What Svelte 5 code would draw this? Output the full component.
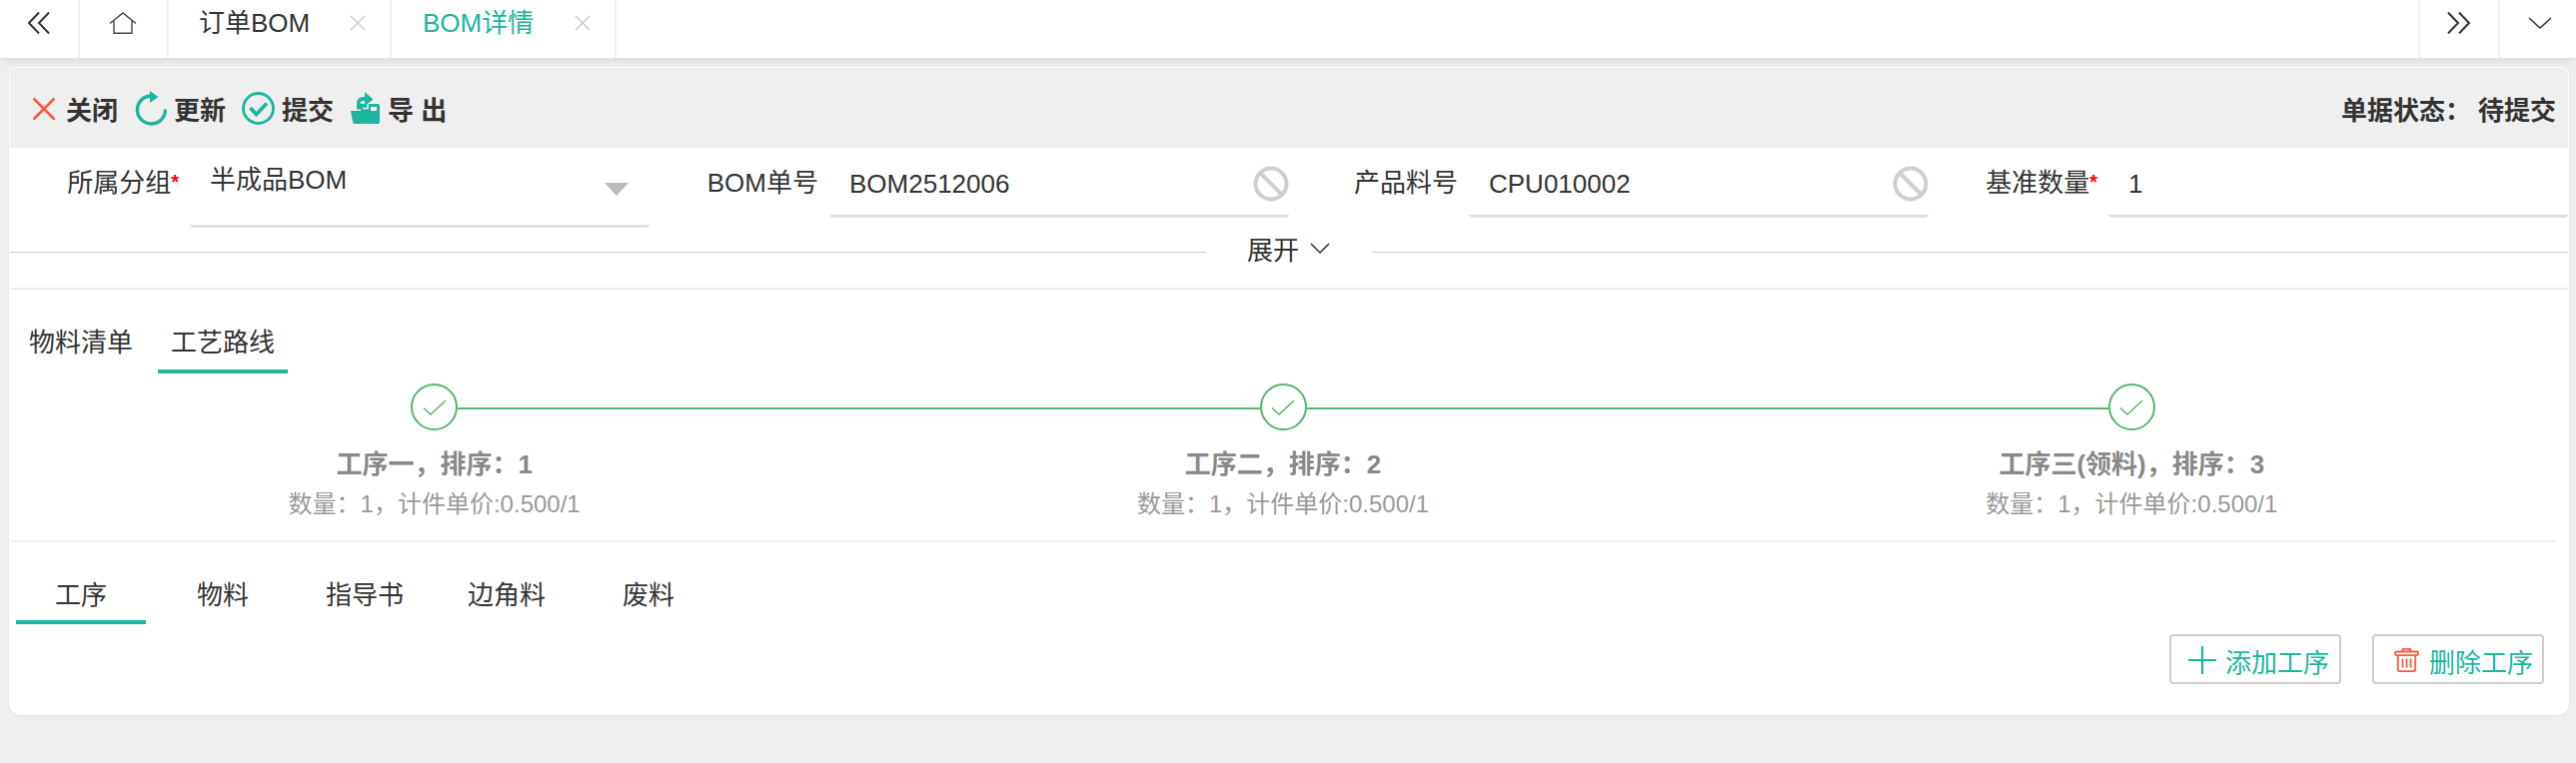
<script>
  const nav = ['物料', '指导书', '边角料', '废料'];
  const steps = [
    { title: '工序一，排序：1' },
    { title: '工序二，排序：2' },
    { title: '工序三(领料)，排序：3' }
  ];
</script>

<div class="page">
  <header class="topbar">
    <div class="cell arrow-left">
      <svg width="22" height="22" viewBox="0 0 22 22" fill="none" stroke="#333" stroke-width="2"><path d="M11 0.5 1 11l10 10.5M21 0.5 11 11l10 10.5" /></svg>
    </div>
    <div class="cell home">
      <svg width="28" height="22" viewBox="0 0 28 22" fill="none" stroke="#444" stroke-width="1.4"><path d="M1 11.5 14 1l13 10.5M5 9v12.3h18V9" /></svg>
    </div>
    <div class="cell tab-a">
      <span class="tab-text">订单BOM</span>
      <svg class="close" width="16" height="16" viewBox="0 0 16 16" stroke="#c4c4c4" stroke-width="1.3"><path d="M1 1l14 14M15 1 1 15" /></svg>
    </div>
    <div class="cell tab-b">
      <span class="tab-text active">BOM详情</span>
      <svg class="close" width="16" height="16" viewBox="0 0 16 16" stroke="#c4c4c4" stroke-width="1.3"><path d="M1 1l14 14M15 1 1 15" /></svg>
    </div>
    <div class="spacer"></div>
    <div class="cell arrow-right">
      <svg width="23" height="22" viewBox="0 0 23 22" fill="none" stroke="#333" stroke-width="2"><path d="M1 0.5 11 11 1 21.5M12 0.5 22 11 12 21.5" /></svg>
    </div>
    <div class="cell arrow-down">
      <svg width="24" height="12" viewBox="0 0 24 12" fill="none" stroke="#333" stroke-width="1.5"><path d="M1 1l11 10L23 1" /></svg>
    </div>
  </header>

  <main class="main">
    <section class="card">
      <div class="toolbar">
        <button class="tool first">
          <svg width="24" height="24" viewBox="0 0 24 24" stroke="#fb5a3c" stroke-width="2.6"><path d="M1.5 1.5l21 21M22.5 1.5l-21 21" /></svg>
          <span>关闭</span>
        </button>
        <button class="tool">
          <svg width="32" height="35" viewBox="0 0 32 35" fill="none"><path d="M15.5 5A14 14 0 1 0 30.4 18.5" stroke="#1ab69f" stroke-width="3.4" /><path d="M15 0l8.5 6L15 12z" fill="#1ab69f" /></svg>
          <span>更新</span>
        </button>
        <button class="tool">
          <svg width="33" height="33" viewBox="0 0 33 33" fill="none"><circle cx="16.5" cy="16.5" r="15" stroke="#1ab69f" stroke-width="2.8" /><path d="M8.5 16l6 6.5L25 11.5" stroke="#1ab69f" stroke-width="3.8" /></svg>
          <span>提交</span>
        </button>
        <button class="tool">
          <svg width="29" height="33" viewBox="0 0 29 33">
            <path d="M10 12h17a2 2 0 0 1 2 2v16H10z" fill="#1ab69f" />
            <rect x="20" y="15" width="6" height="4.5" fill="#efefef" />
            <path d="M0 19h29v11a2 2 0 0 1-2 2H4a2 2 0 0 1-2-2z" fill="#1ab69f" />
            <path d="M8 17.5V11a4 4 0 0 1 4-4h3" fill="none" stroke="#1ab69f" stroke-width="4" />
            <path d="M12 16.5h5V11" fill="none" stroke="#efefef" stroke-width="1.5" />
            <path d="M14 0l8.5 7.5L14 14z" fill="#1ab69f" />
          </svg>
          <span>导&nbsp;出</span>
        </button>
        <div class="status">单据状态：<span class="status-value">待提交</span></div>
      </div>

      <div class="form">
        <div class="field">
          <span class="label">所属分组<i>*</i></span>
          <div class="control select">
            <span class="value">半成品BOM</span>
            <span class="caret"></span>
          </div>
        </div>
        <div class="field">
          <span class="label">BOM单号</span>
          <div class="control">
            <span class="value">BOM2512006</span>
            <svg class="ban" width="36" height="36" viewBox="0 0 36 36" fill="none" stroke="#cfcfcf" stroke-width="4"><circle cx="18" cy="18" r="15.5" /><path d="M7 7l22 22" /></svg>
          </div>
        </div>
        <div class="field">
          <span class="label">产品料号</span>
          <div class="control">
            <span class="value">CPU010002</span>
            <svg class="ban" width="36" height="36" viewBox="0 0 36 36" fill="none" stroke="#cfcfcf" stroke-width="4"><circle cx="18" cy="18" r="15.5" /><path d="M7 7l22 22" /></svg>
          </div>
        </div>
        <div class="field">
          <span class="label">基准数量<i>*</i></span>
          <div class="control">
            <span class="value">1</span>
          </div>
        </div>
      </div>

      <div class="expand">
        <span class="rule"></span>
        <span class="expand-btn">
          展开
          <svg width="20" height="11" viewBox="0 0 20 11" fill="none" stroke="#333" stroke-width="1.5"><path d="M1 1l9 9 9-9" /></svg>
        </span>
        <span class="rule"></span>
      </div>

      <div class="tabs upper">
        <div class="tabitem">物料清单</div>
        <div class="tabitem on">工艺路线</div>
      </div>

      <div class="steps">
        {#each steps as s, i}
          <div class="step">
            <div class="head">
              <span class="conn" class:hide={i === 0}></span>
              <span class="dot">
                <svg width="24" height="16" viewBox="0 0 24 16" fill="none" stroke="#57b56f" stroke-width="1.5"><path d="M1 8.5l7 6.5L23 1" /></svg>
              </span>
              <span class="conn" class:hide={i === steps.length - 1}></span>
            </div>
            <div class="title">{s.title}</div>
            <div class="sub">数量：1，计件单价:0.500/1</div>
          </div>
        {/each}
      </div>

      <div class="tabs lower">
        <div class="tabitem on">工序</div>
        {#each nav as n}
          <div class="tabitem">{n}</div>
        {/each}
      </div>

      <div class="actions">
        <button class="btn add">
          <svg width="28" height="28" viewBox="0 0 28 28" stroke="#1ab69f" stroke-width="2.2"><path d="M14 0v28M0 14h28" /></svg>
          <span>添加工序</span>
        </button>
        <button class="btn del">
          <svg width="25" height="24" viewBox="0 0 25 24" fill="none" stroke="#fb5a3c" stroke-width="1.8"><path d="M8.5 3.5V1.5a.8.8 0 0 1 .8-.6h6.4a.8.8 0 0 1 .8.6v2" /><rect x="1" y="3.5" width="23" height="3.6" rx="1.4" /><path d="M3.8 7.2V21.5a1.6 1.6 0 0 0 1.6 1.6h14.2a1.6 1.6 0 0 0 1.6-1.6V7.2M8.5 10.5v9M12.5 10.5v9M16.5 10.5v9" /></svg>
          <span>删除工序</span>
        </button>
      </div>
    </section>
  </main>
</div>

<style>
  :global(body) {
    margin: 0;
    background: #efefef;
    font-family: "Liberation Sans", "Noto Sans CJK SC", sans-serif;
    color: #333;
  }
  .page {
    height: 764px;
    overflow: hidden;
  }
  .topbar {
    display: flex;
    height: 58px;
    background: #fff;
    box-shadow: 0 2px 8px rgba(0, 0, 0, 0.1);
    position: relative;
    font-size: 26px;
  }
  .cell {
    display: flex;
    align-items: center;
    height: 46px;
    padding-bottom: 12px;
    border-right: 2px solid #efefef;
    box-sizing: content-box;
  }
  .arrow-left { width: 50px; padding-left: 28px; }
  .home { width: 58px; padding-left: 29px; }
  .tab-a { width: 191px; padding-left: 30px; }
  .tab-b { width: 192px; padding-left: 31px; }
  .tab-text { flex: 1; line-height: 36px; color: #333; }
  .tab-text.active { color: #1ab69f; }
  .close { margin-right: 24px; }
  .spacer { flex: 1; }
  .arrow-right {
    width: 51px;
    padding-left: 27px;
    border-right: 2px solid #efefef;
    border-left: 2px solid #efefef;
  }
  .arrow-down {
    width: 48px;
    padding-left: 28px;
    border-right: 0;
  }

  .main {
    padding: 9px 7px 0 9px;
  }
  .card {
    height: 649px;
    padding: 1px 1px 0;
    box-sizing: border-box;
    background: #fff;
    border-radius: 8px 8px 12px 12px;
    box-shadow: 0 1px 3px rgba(0, 0, 0, 0.05);
  }
  .toolbar {
    display: flex;
    align-items: center;
    height: 80px;
    background: #efefef;
    padding: 1px 12px 0 22px;
    box-sizing: border-box;
    border-radius: 6px 6px 4px 0;
  }
  .tool {
    display: flex;
    align-items: center;
    gap: 7px;
    height: 40px;
    padding: 0;
    margin-right: 17px;
    border: 0;
    background: none;
    font: inherit;
    font-size: 26px;
    font-weight: 700;
    color: #333;
  }
  .tool svg { flex: none; }
  .tool.first { gap: 10px; }
  .tool:nth-child(2) { margin-right: 16px; }
  .tool:nth-child(4) { gap: 8px; }
  .status {
    margin-left: auto;
    font-size: 26px;
    font-weight: 700;
    color: #333;
  }
  .status-value { margin-left: 7px; }

  .form {
    display: grid;
    grid-template-columns: repeat(4, 640px);
    height: 82px;
  }
  .field {
    display: flex;
    height: 80px;
    padding-top: 10px;
    box-sizing: border-box;
  }
  .label {
    width: 180px;
    padding-right: 11px;
    box-sizing: border-box;
    text-align: right;
    font-size: 26px;
    line-height: 50px;
    flex: none;
    white-space: nowrap;
  }
  .label i {
    color: #f00;
    font-style: normal;
    font-weight: 700;
    font-size: 20px;
    position: relative;
    top: -3px;
  }
  .control {
    display: flex;
    align-items: center;
    justify-content: space-between;
    width: 460px;
    height: 60px;
    box-sizing: border-box;
    padding-left: 20px;
    padding-bottom: 5px;
    border-bottom: 3px solid #e0e0e0;
    border-radius: 0 0 4px 4px;
    font-size: 26px;
  }
  .control .value { line-height: 34px; }
  .select {
    height: 70px;
    padding-bottom: 23px;
    padding-right: 21px;
  }
  .caret {
    width: 0;
    height: 0;
    border-left: 12px solid transparent;
    border-right: 12px solid transparent;
    border-top: 13px solid #bbb;
    position: relative;
    top: 9px;
  }
  .ban { flex: none; }

  .expand {
    display: flex;
    align-items: center;
    height: 60px;
    padding-bottom: 16px;
    box-sizing: border-box;
    border-bottom: 2px solid #eee;
  }
  .rule {
    flex: 1;
    height: 1px;
    margin-top: 2px;
    background: #ccc;
  }
  .expand-btn {
    display: flex;
    align-items: center;
    gap: 11px;
    width: 166px;
    padding-left: 41px;
    padding-bottom: 5px;
    box-sizing: border-box;
    font-size: 26px;
  }

  .tabs {
    display: flex;
    gap: 12px;
    font-size: 26px;
    padding-left: 6px;
  }
  .tabitem {
    width: 130px;
    text-align: center;
    line-height: 36px;
    padding-bottom: 7px;
    border-bottom: 4px solid transparent;
  }
  .tabitem.on { border-bottom-color: #1ab69f; }
  .upper { padding-top: 35px; }
  .upper .tabitem { padding-bottom: 9px; }
  .lower { padding-top: 35px; }

  .steps {
    display: flex;
    width: 2548px;
    padding: 10px 0 19px;
    border-bottom: 2px solid #eee;
  }
  .step {
    flex: 1;
    display: flex;
    flex-direction: column;
    align-items: center;
    text-align: center;
  }
  .head {
    display: flex;
    align-items: center;
    width: 100%;
  }
  .conn {
    flex: 1;
    height: 2px;
    margin-top: 2px;
    background: #57b56f;
  }
  .conn.hide { background: transparent; }
  .dot {
    flex: none;
    display: flex;
    align-items: center;
    justify-content: center;
    width: 47px;
    height: 47px;
    box-sizing: border-box;
    border: 2px solid #57b56f;
    border-radius: 50%;
  }
  .title {
    margin-top: 16px;
    font-size: 26px;
    line-height: 36px;
    font-weight: 700;
    color: #888;
  }
  .sub {
    margin-top: 5px;
    font-size: 24px;
    line-height: 34px;
    color: #999;
  }

  .actions {
    display: flex;
    justify-content: flex-end;
    gap: 31px;
    padding: 10px 24px 0 0;
  }
  .btn {
    display: flex;
    align-items: center;
    gap: 9px;
    width: 172px;
    height: 50px;
    padding: 2px 0 0 17px;
    box-sizing: border-box;
    background: #fff;
    border: 2px solid #ccc;
    border-radius: 4px;
    font: inherit;
    font-size: 26px;
    color: #1ab69f;
    white-space: nowrap;
  }
  .btn svg { flex: none; }
  .btn.del { padding-left: 20px; gap: 10px; }
</style>
